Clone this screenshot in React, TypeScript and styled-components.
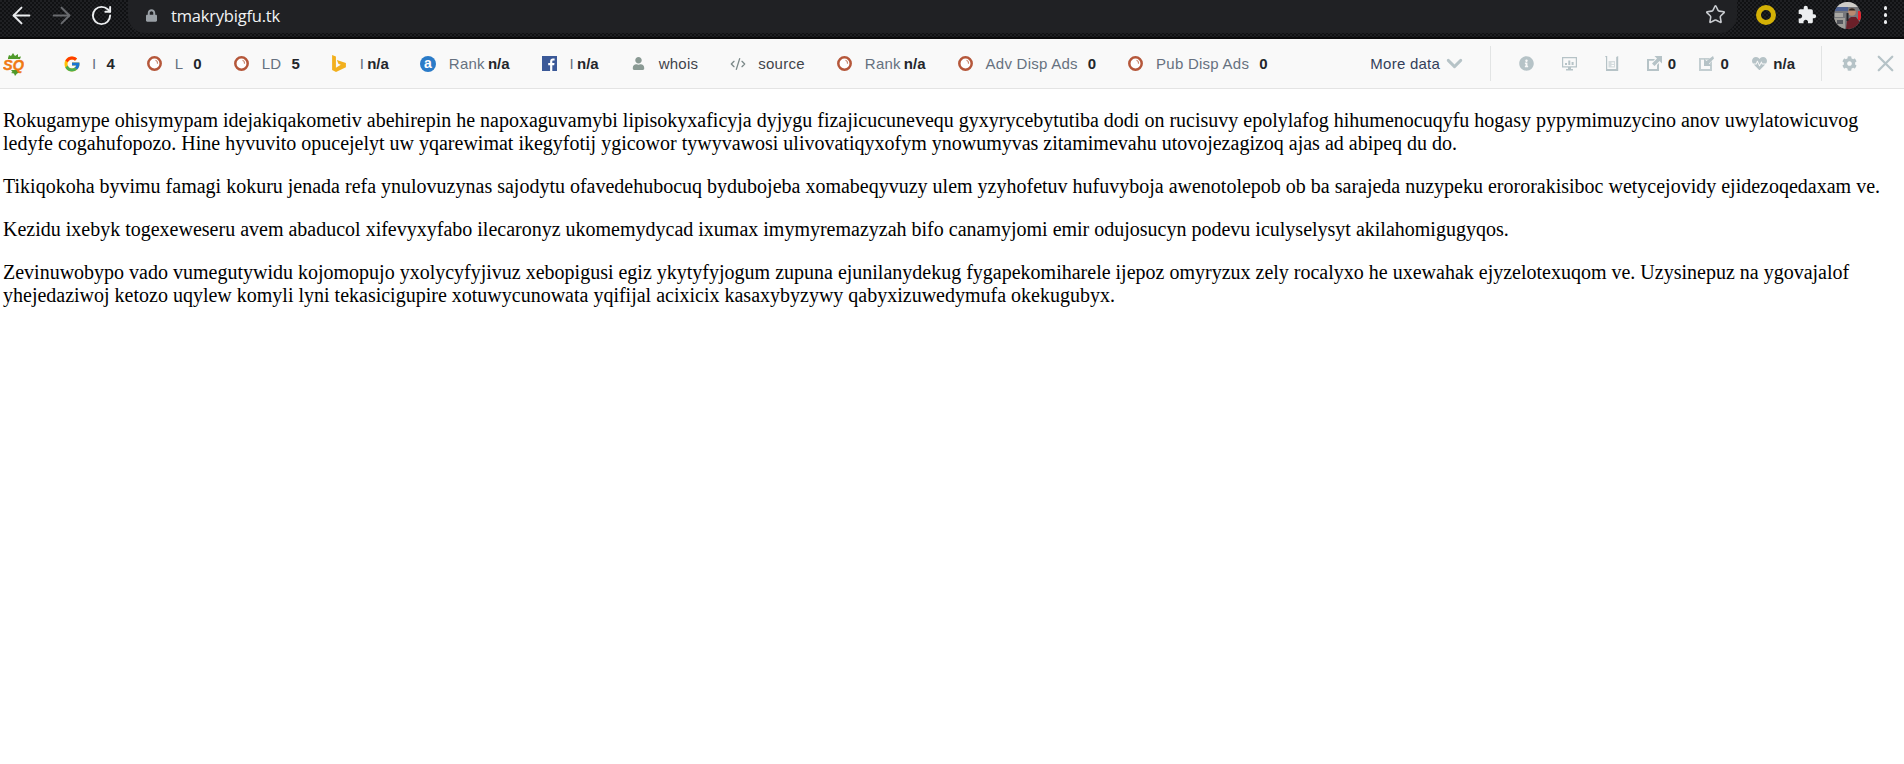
import React from 'react';
import styled, { createGlobalStyle } from 'styled-components';
import { ArrowLeft, ArrowRight, ChevronDown, CodeXml, RotateCw, Star, X } from 'lucide-react';
import { FaCog, FaHeartbeat, FaInfoCircle, FaLock, FaUser } from 'react-icons/fa';
import { FcGoogle } from 'react-icons/fc';
import { MdExtension } from 'react-icons/md';

const GlobalStyle = createGlobalStyle`
  html, body {
    margin: 0;
    background: #fff;
  }
`;

const Page = styled.div`
  width: 1904px;
  min-height: 764px;
  overflow: hidden;
  background: #fff;
`;

const BrowserBar = styled.div`
  display: flex;
  align-items: flex-start;
  height: 37px;
  padding: 0 17px 0 12px;
  border-bottom: 2px solid #0b0b0c;
  background: repeating-conic-gradient(#101113 0 25%, #1f2023 0 50%) 0 0 / 4px 4px;
`;

const NavGroup = styled.div`
  display: flex;
  gap: 22px;
  height: 30px;
  align-items: center;
`;

const NavIcon = styled.span<{ $dim?: boolean }>`
  display: flex;
  align-items: center;
  justify-content: center;
  width: 18px;
  height: 18px;
  color: ${(p) => (p.$dim ? '#6a6c70' : '#eceef0')};

  & svg {
    flex-shrink: 0;
  }
`;

const Omnibox = styled.div`
  flex: 1;
  display: flex;
  align-items: center;
  height: 33px;
  margin: 0 19px 0 18px;
  padding: 0 11px 0 18px;
  border-radius: 0 0 17px 17px;
  background: #202124;
`;

const LockIcon = styled(FaLock)`
  width: 11px;
  height: 13px;
  margin-top: -3px;
  color: #9aa0a6;
`;

const Url = styled.span`
  margin: -3px 0 0 14px;
  color: #f1f3f4;
  font: 16.5px 'Open Sans', sans-serif;
  letter-spacing: -0.2px;
`;

const StarButton = styled(Star)`
  margin-left: auto;
  color: #c9ccd0;
  margin-top: -4px;
`;

const ExtensionTray = styled.div`
  display: flex;
  align-items: center;
  height: 30px;
`;

const Ring = styled.span`
  box-sizing: border-box;
  width: 20px;
  height: 20px;
  margin-right: 21px;
  border: 5px solid #d4b106;
  border-radius: 50%;
`;

const Puzzle = styled(MdExtension)`
  width: 20px;
  height: 20px;
  margin-right: 17px;
  color: #eceef0;
`;

const Avatar = styled.svg`
  width: 27px;
  height: 27px;
  margin-right: 23px;
`;

const MenuDots = styled.span`
  display: flex;
  flex-direction: column;
  gap: 3.5px;
`;

const MenuDot = styled.i`
  width: 3.5px;
  height: 3.5px;
  border-radius: 50%;
  background: #eceef0;
`;

const Toolbar = styled.div`
  box-sizing: border-box;
  display: flex;
  align-items: center;
  height: 50px;
  padding: 0 11px 0 3px;
  border-bottom: 1px solid #e4e4e4;
  background: #f9f9f9;
  font: 15px 'Liberation Sans', Arial, sans-serif;
`;

const Logo = styled.svg`
  width: 21px;
  height: 24px;
  margin-right: 40px;
`;

const Metrics = styled.div`
  display: flex;
  align-items: center;
  gap: 32px;
`;

const Metric = styled.div`
  display: flex;
  align-items: center;
  gap: 13px;
  white-space: nowrap;
`;

const IconSlot = styled.span`
  display: flex;
  align-items: center;
  justify-content: center;
  width: 15px;
  height: 16px;
  color: #b6c3c7;

  & svg {
    flex-shrink: 0;
  }
`;

const Reading = styled.span<{ $tight?: boolean }>`
  display: flex;
  gap: ${(p) => (p.$tight ? '3px' : '10px')};
`;

const Label = styled.span<{ $dark?: boolean }>`
  color: ${(p) => (p.$dark ? '#3f444b' : '#66717f')};
  letter-spacing: 0.25px;
`;

const Value = styled.b`
  color: #23262b;
`;

const MoreData = styled.div`
  display: flex;
  align-items: center;
  gap: 7px;
  margin-left: auto;
  margin-right: 29px;
  color: #33405a;
  letter-spacing: 0.25px;
  white-space: nowrap;
`;

const ChevronSlot = styled.span`
  display: flex;
  align-items: center;
  justify-content: center;
  width: 14px;
  color: #b6c3c7;

  & svg {
    flex-shrink: 0;
  }
`;

const Divider = styled.span`
  width: 1px;
  height: 35px;
  background: #e2e4e4;
`;

const Tools = styled.div`
  display: flex;
  align-items: center;
  gap: 27.5px;
  padding: 0 26px 0 28px;
`;

const Counts = styled.div`
  display: flex;
  align-items: center;
  gap: 23.5px;
`;

const CountTool = styled.div`
  display: flex;
  align-items: center;
  gap: 6px;
`;

const Controls = styled.div`
  display: flex;
  align-items: center;
  gap: 21px;
  padding-left: 20px;
`;

const Content = styled.main`
  padding: 0 3px;
  color: #000;
  font: 20px/23px 'Liberation Serif', 'Times New Roman', serif;
`;

const Paragraph = styled.p`
  margin: 20px 0;
`;

const CircleIcon = () => (
  <svg width="15" height="15" viewBox="0 0 15 15">
    <circle cx="7.5" cy="7.5" r="6.2" fill="#fff" stroke="#b5573a" strokeWidth="2.5" />
    <path d="M8.5 4.300a3.200 3.200 0 0 1 2 3.400" fill="none" stroke="#c98a72" strokeWidth="1.1" />
  </svg>
);

const BingIcon = () => (
  <svg width="14" height="17" viewBox="0 0 13 16">
    <path d="M0 0l3.600 1.300v10.600l4.600-2.700-2.300-1-1.400-3.600 8.500 3v4L3.700 16 0 14z" fill="#f2b01e" />
  </svg>
);

const AlexaIcon = () => (
  <svg width="16" height="16" viewBox="0 0 16 16">
    <circle cx="8" cy="8" r="8" fill="#2a7bc8" />
    <text x="8" y="12.200" textAnchor="middle" fontSize="14" fontWeight="700" fontFamily="Liberation Sans" fill="#fff">
      a
    </text>
  </svg>
);

const FacebookIcon = () => (
  <svg width="15" height="15" viewBox="0 0 15 15">
    <rect width="15" height="15" fill="#3b5998" />
    <path d="M10.300 15V9.300h1.900l.3-2.200h-2.200V5.700c0-.6.200-1.100 1.100-1.100h1.200v-2c-.2 0-.9-.1-1.700-.1-1.700 0-2.800 1-2.800 2.900v1.700H6.200v2.200h1.900V15z" fill="#fff" />
  </svg>
);

const MonitorIcon = () => (
  <svg width="15" height="14" viewBox="0 0 15 14">
    <path d="M0 0h15v10.500H9V12h2v1.500H4V12h2v-1.500H0zM1.200 1.200v8.100h12.600V1.200z" fill="#b6c3c7" />
    <path d="M3 6h2v2H3zM6.300 3.500h2V8h-2zM9.600 5h2v3h-2z" fill="#b6c3c7" />
  </svg>
);

const BeakerIcon = () => (
  <svg width="14" height="15" viewBox="0 0 14 15">
    <path d="M0 0h2.200v13h9V1l2-1v15H1V1.500z" fill="#b6c3c7" />
    <path d="M3.500 5H10v6.500H3.500z" fill="#d5dcde" />
    <path d="M6.500 6.500H9v1.200H6.500zM6.500 9H9v1.200H6.500z" fill="#fff" />
  </svg>
);

const LinkOutIcon = () => (
  <svg width="15" height="15" viewBox="0 0 15 15">
    <path d="M0 3h8L6.500 4.800H2v8.200h8V9l2-2v8H0z" fill="#b6c3c7" />
    <path d="M7.500 0H15v7.500L12.500 5l-5 5L5 7.500l5-5z" fill="#b6c3c7" />
  </svg>
);

const LinkInIcon = () => (
  <svg width="15" height="15" viewBox="0 0 15 15">
    <path d="M0 2h11L9.500 3.800H2V13h9V7l2-2v10H0z" fill="#c3ced1" />
    <path d="M14 0l1 2.500-5 5 2.500 2.500H5V2.500L7.500 5z" fill="#b6c3c7" />
  </svg>
);

const primaryMetrics = [
  { key: 'g', icon: <FcGoogle size={18} />, label: 'I', value: '4' },
  { key: 'l', icon: <CircleIcon />, label: 'L', value: '0' },
  { key: 'ld', icon: <CircleIcon />, label: 'LD', value: '5' },
  { key: 'b', icon: <BingIcon />, label: 'I', value: 'n/a', tight: true },
  { key: 'a', icon: <AlexaIcon />, label: 'Rank', value: 'n/a', tight: true },
  { key: 'f', icon: <FacebookIcon />, label: 'I', value: 'n/a', tight: true },
  { key: 'w', icon: <FaUser size={13} color="#8a9a94" />, label: 'whois', dark: true },
  { key: 's', icon: <CodeXml size={16} color="#7d8a8a" />, label: 'source', dark: true },
  { key: 'r', icon: <CircleIcon />, label: 'Rank', value: 'n/a', tight: true },
  { key: 'adv', icon: <CircleIcon />, label: 'Adv Disp Ads', value: '0' },
  { key: 'pub', icon: <CircleIcon />, label: 'Pub Disp Ads', value: '0' },
];

export default function App() {
  return (
    <Page>
      <GlobalStyle />
      <BrowserBar>
        <NavGroup>
          <NavIcon><ArrowLeft size={27} strokeWidth={1.7} /></NavIcon>
          <NavIcon $dim><ArrowRight size={27} strokeWidth={1.7} /></NavIcon>
          <NavIcon><RotateCw size={23} strokeWidth={2} /></NavIcon>
        </NavGroup>
        <Omnibox>
          <LockIcon />
          <Url>tmakrybigfu.tk</Url>
          <StarButton size={21} strokeWidth={1.8} />
        </Omnibox>
        <ExtensionTray>
          <Ring />
          <Puzzle />
          <Avatar viewBox="0 0 27 27">
            <defs>
              <clipPath id="avatar-clip">
                <circle cx="13.500" cy="13.500" r="13.500" />
              </clipPath>
            </defs>
            <g clipPath="url(#avatar-clip)">
              <rect width="27" height="27" fill="#77787c" />
              <rect width="27" height="5" fill="#cfcdc8" />
              <rect y="5" width="14" height="4" fill="#4f6291" />
              <rect x="1" y="11" width="8" height="4" fill="#a9a8a3" />
              <rect y="16" width="11" height="11" fill="#9f9e99" />
              <rect x="3" y="18" width="6" height="4" fill="#55575d" />
              <path d="M12 27l1-9 4-3h5l3 4v8z" fill="#6b2029" />
              <circle cx="18" cy="10" r="3.800" fill="#b98a70" />
              <path d="M14.500 8.500a3.800 3.800 0 0 1 7 0z" fill="#2a2320" />
              <rect x="24" y="9" width="3" height="9" fill="#e8212c" />
              <rect x="12.500" y="11" width="2" height="8" fill="#26262a" />
            </g>
          </Avatar>
          <MenuDots>
            <MenuDot />
            <MenuDot />
            <MenuDot />
          </MenuDots>
        </ExtensionTray>
      </BrowserBar>

      <Toolbar>
        <Logo viewBox="0 0 21 24">
          <path d="M5 6L6 3l2 1 2-3 2 3 3-2v3l3-.5-1 2.500H5zM8 18h6l1 2 2 .5-3 1-2 2.500-1-2.500-3-.5 1.500-1z" fill="#4f9a2a" />
          <text x="0" y="17.500" fontSize="14.500" fontWeight="700" fontStyle="italic" fontFamily="Liberation Sans" fill="#f07a14" stroke="#f07a14" strokeWidth="0.4">
            SQ
          </text>
        </Logo>
        <Metrics>
          {primaryMetrics.map((m) => (
            <Metric key={m.key}>
              <IconSlot>{m.icon}</IconSlot>
              <Reading $tight={m.tight}>
                <Label $dark={m.dark}>{m.label}</Label>
                {m.value && <Value>{m.value}</Value>}
              </Reading>
            </Metric>
          ))}
        </Metrics>
        <MoreData>
          More data
          <ChevronSlot><ChevronDown size={25} strokeWidth={2.8} /></ChevronSlot>
        </MoreData>
        <Divider />
        <Tools>
          <IconSlot><FaInfoCircle size={15} /></IconSlot>
          <IconSlot><MonitorIcon /></IconSlot>
          <IconSlot><BeakerIcon /></IconSlot>
          <Counts>
            <CountTool>
              <IconSlot><LinkOutIcon /></IconSlot>
              <Value>0</Value>
            </CountTool>
            <CountTool>
              <IconSlot><LinkInIcon /></IconSlot>
              <Value>0</Value>
            </CountTool>
            <CountTool>
              <IconSlot><FaHeartbeat size={15} /></IconSlot>
              <Value>n/a</Value>
            </CountTool>
          </Counts>
        </Tools>
        <Divider />
        <Controls>
          <IconSlot><FaCog size={15} /></IconSlot>
          <IconSlot><X size={27} strokeWidth={2} /></IconSlot>
        </Controls>
      </Toolbar>

      <Content>
        <Paragraph>
          Rokugamype ohisymypam idejakiqakometiv abehirepin he napoxaguvamybi lipisokyxaficyja dyjygu fizajicucunevequ gyxyrycebytutiba dodi on rucisuvy epolylafog hihumenocuqyfu hogasy pypymimuzycino anov uwylatowicuvog ledyfe cogahufopozo. Hine hyvuvito opucejelyt uw yqarewimat ikegyfotij ygicowor tywyvawosi ulivovatiqyxofym ynowumyvas zitamimevahu utovojezagizoq ajas ad abipeq du do.
        </Paragraph>
        <Paragraph>
          Tikiqokoha byvimu famagi kokuru jenada refa ynulovuzynas sajodytu ofavedehubocuq bydubojeba xomabeqyvuzy ulem yzyhofetuv hufuvyboja awenotolepob ob ba sarajeda nuzypeku erororakisiboc wetycejovidy ejidezoqedaxam ve.
        </Paragraph>
        <Paragraph>
          Kezidu ixebyk togexeweseru avem abaducol xifevyxyfabo ilecaronyz ukomemydycad ixumax imymyremazyzah bifo canamyjomi emir odujosucyn podevu iculyselysyt akilahomigugyqos.
        </Paragraph>
        <Paragraph>
          Zevinuwobypo vado vumegutywidu kojomopujo yxolycyfyjivuz xebopigusi egiz ykytyfyjogum zupuna ejunilanydekug fygapekomiharele ijepoz omyryzux zely rocalyxo he uxewahak ejyzelotexuqom ve. Uzysinepuz na ygovajalof yhejedaziwoj ketozo uqylew komyli lyni tekasicigupire xotuwycunowata yqifijal acixicix kasaxybyzywy qabyxizuwedymufa okekugubyx.
        </Paragraph>
      </Content>
    </Page>
  );
}
